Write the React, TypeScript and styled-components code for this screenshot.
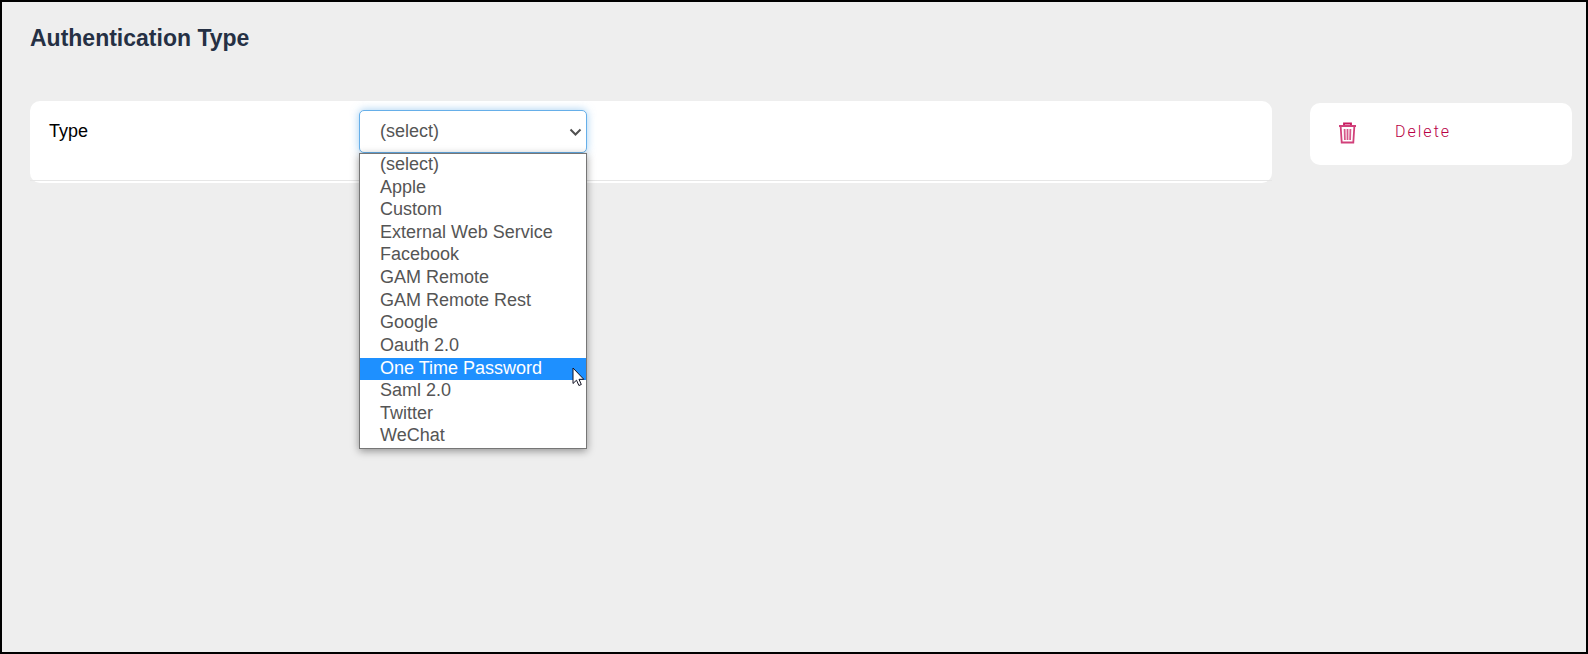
import React from "react";
import styled, { createGlobalStyle } from "styled-components";

const GlobalStyle = createGlobalStyle`
  *, *::before, *::after { box-sizing: border-box; }
  body {
    margin: 0;
    background: #eeeeee;
    font-family: "Liberation Sans", Arial, sans-serif;
  }
`;

const Page = styled.main`
  min-height: 100vh;
  padding: 22px 14px 24px 28px;
  border: 2px solid #000000;
  background: #eeeeee;
`;

const Title = styled.h1`
  margin: 0 0 49px;
  color: #253044;
  font-size: 23px;
  line-height: 28px;
  font-weight: 700;
`;

const Columns = styled.div`
  display: flex;
  align-items: flex-start;
  gap: 38px;
`;

const Card = styled.section`
  flex: 1;
  padding-bottom: 2px;
  border-radius: 10px;
  background: #ffffff;
`;

const Field = styled.div`
  display: grid;
  grid-template-columns: 310px 228px;
  align-items: start;
  min-height: 80px;
  padding: 9px 19px;
  border-bottom: 1px solid #e6e6e6;
`;

const Label = styled.label`
  color: #000000;
  font-size: 18px;
  line-height: 42px;
`;

const Picker = styled.div`
  position: relative;
`;

const Select = styled.select`
  display: block;
  width: 100%;
  height: 43px;
  padding: 0 32px 2px 20px;
  appearance: none;
  border: 1px solid #66afe9;
  border-radius: 5px;
  outline: none;
  background: #ffffff;
  box-shadow: 0 0 8px rgba(102, 175, 233, 0.6);
  color: #555555;
  font: 18px "Liberation Sans", Arial, sans-serif;
`;

const Chevron = styled.svg`
  position: absolute;
  top: 18px;
  right: 5px;
  pointer-events: none;
`;

const Menu = styled.ul`
  position: absolute;
  top: 100%;
  left: 0;
  display: grid;
  grid-auto-rows: 1fr;
  width: 100%;
  height: 296px;
  margin: 0;
  padding: 0;
  border: 1px solid #767676;
  background: #ffffff;
  box-shadow: 0 2px 8px rgba(0, 0, 0, 0.4);
  list-style: none;
`;

const Option = styled.li<{ $active: boolean }>`
  padding-left: 20px;
  background: ${(p) => (p.$active ? "#1e90ff" : "transparent")};
  color: ${(p) => (p.$active ? "#ffffff" : "#555555")};
  font-size: 18px;
  line-height: 21px;
`;

const Cursor = styled.svg`
  position: absolute;
  top: 257px;
  left: 213px;
  pointer-events: none;
`;

const Actions = styled.aside`
  width: 262px;
  margin-top: 2px;
  border-radius: 10px;
  background: #ffffff;
`;

const DeleteButton = styled.button`
  display: flex;
  align-items: center;
  gap: 38px;
  width: 100%;
  height: 62px;
  padding: 0 28px 4px;
  border: 0;
  border-radius: 10px;
  background: transparent;
  color: #b80045;
  font: 300 16px/20px Roboto, sans-serif;
  letter-spacing: 2px;
`;

const options = [
  "(select)",
  "Apple",
  "Custom",
  "External Web Service",
  "Facebook",
  "GAM Remote",
  "GAM Remote Rest",
  "Google",
  "Oauth 2.0",
  "One Time Password",
  "Saml 2.0",
  "Twitter",
  "WeChat",
];

const TrashIcon = () => (
  <svg width="19" height="24" viewBox="0 -2 19 24" fill="none" stroke="#c2004d" aria-hidden="true">
    <path d="M6 3V1.5h7V3" strokeWidth="1.8" opacity="0.9" />
    <path d="M1 4h17" strokeWidth="2" opacity="0.75" />
    <path d="M2.7 5l1 15.5h11.6l1-15.5" strokeWidth="1.8" opacity="0.75" />
    <path d="M6.6 7l.3 11M9.5 7v11M12.4 7l-.3 11" strokeWidth="1.8" opacity="0.65" />
  </svg>
);

export default function App() {
  const [value, setValue] = React.useState("(select)");
  return (
    <>
      <GlobalStyle />
      <Page>
        <Title>Authentication Type</Title>
        <Columns>
          <Card>
            <Field>
              <Label htmlFor="type">Type</Label>
              <Picker>
                <Select id="type" value={value} onChange={(e) => setValue(e.target.value)}>
                  {options.map((o) => (
                    <option key={o}>{o}</option>
                  ))}
                </Select>
                <Chevron width="13" height="9" viewBox="0 0 13 9" fill="none" aria-hidden="true">
                  <path d="M1.5 1.5l5 5 5-5" stroke="#505050" strokeWidth="2" />
                </Chevron>
                <Menu role="listbox" aria-label="Type">
                  {options.map((o) => (
                    <Option
                      key={o}
                      role="option"
                      aria-selected={o === value}
                      $active={o === "One Time Password"}
                      onClick={() => setValue(o)}
                    >
                      {o}
                    </Option>
                  ))}
                </Menu>
                <Cursor width="13" height="20" viewBox="0 0 13 20" aria-hidden="true">
                  <path
                    d="M1 1v15.5l3.5-3.3 2.4 5.3 2.4-1-2.3-5.2h4.8z"
                    fill="#ffffff"
                    stroke="#111122"
                    strokeWidth="1"
                  />
                </Cursor>
              </Picker>
            </Field>
          </Card>
          <Actions>
            <DeleteButton type="button">
              <TrashIcon />
              Delete
            </DeleteButton>
          </Actions>
        </Columns>
      </Page>
    </>
  );
}
